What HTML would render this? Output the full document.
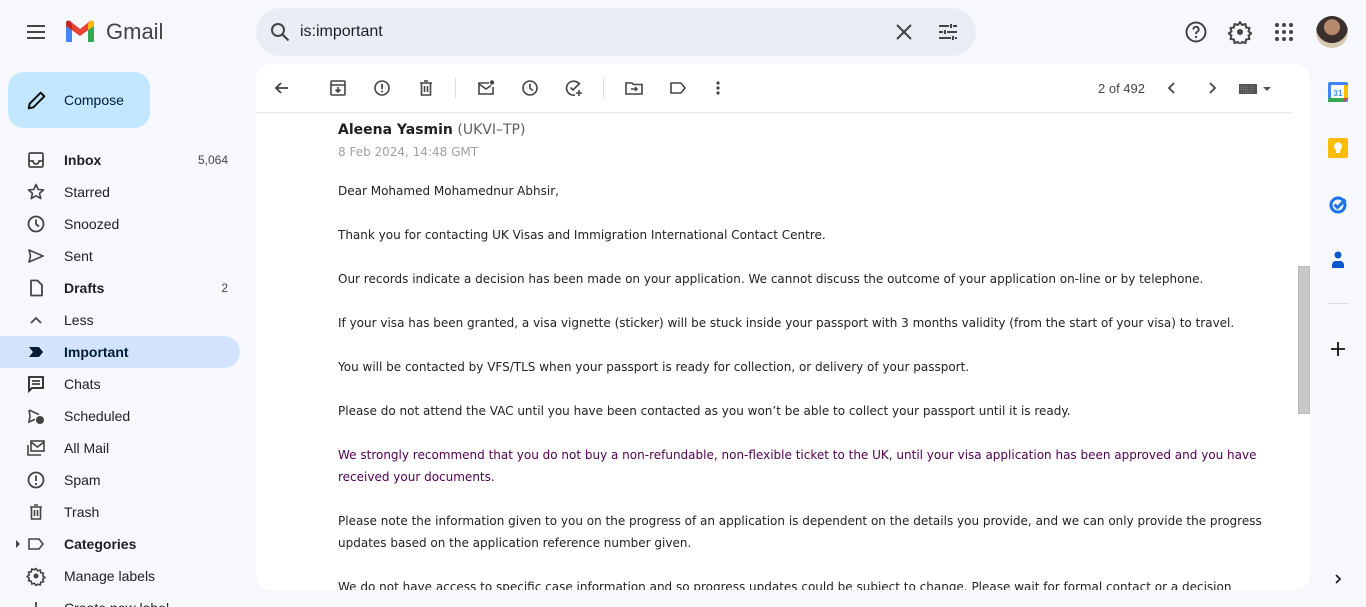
<!DOCTYPE html>
<html><head><meta charset="utf-8"><style>
*{box-sizing:border-box;margin:0;padding:0}
html,body{width:1366px;height:607px;overflow:hidden}
body{background:#f6f8fc;font-family:"Liberation Sans",Arial,sans-serif;color:#1f1f1f;position:relative}
.abs{position:absolute}
svg{display:block}
.nav{position:absolute;left:0;width:240px;height:32px;display:flex;align-items:center;font-size:14px;color:#202124;border-radius:0 16px 16px 0}
.nav .ic{width:64px;display:flex;justify-content:center;padding-left:8px}
.nav .ic svg{width:20px;height:20px}
.nav .cnt{margin-left:auto;margin-right:12px;font-size:12px;color:#444}
.nav b{font-weight:bold}
svg.tb{position:absolute;top:78px;width:20px;height:20px}
.card{position:absolute;left:256px;top:64px;width:1054px;height:526px;background:#fff;border-radius:16px;overflow:hidden}
.body{position:absolute;left:82px;top:116px;font-family:"DejaVu Sans",Verdana,sans-serif;font-size:12px;line-height:22px;color:#222;width:940px}
.body p{margin-bottom:22px}
</style></head><body>
<svg class="abs" style="left:24px;top:22px" width="24" height="20" viewBox="0 0 24 20"><path d="M3 4h18M3 10h18M3 16h18" stroke="#444" stroke-width="2"/></svg>
<svg class="abs" style="left:64px;top:20px" width="32" height="24" viewBox="0 0 32 24"><path d="M2 6v16h6V10z" fill="#4285f4"/><path d="M24 10v12h6V6z" fill="#34a853"/><path d="M2 6l14 10 14-10V3c0-2-2-3-4-2L16 9 6 1C4 0 2 1 2 3z" fill="#ea4335"/><path d="M24 4v6l6-4V3c0-2-3-3-4-2z" fill="#fbbc04"/><path d="M2 3v3l6 4V4L6 1C4 0 2 1 2 3z" fill="#c5221f"/></svg>
<div class="abs" style="left:106px;top:19px;font-size:22px;color:#444">Gmail</div>
<div class="abs" style="left:256px;top:8px;width:720px;height:48px;background:#e9eef6;border-radius:24px"></div>
<svg class="abs" style="left:268px;top:20px" width="24" height="24" viewBox="0 0 24 24"><circle cx="10" cy="10" r="6" fill="none" stroke="#444" stroke-width="2"/><path d="M14.5 14.5l6 6" stroke="#444" stroke-width="2.2"/></svg>
<div class="abs" style="left:300px;top:23px;font-size:16px;color:#202124">is:important</div>
<svg class="abs" style="left:894px;top:22px" width="20" height="20" viewBox="0 0 20 20"><path d="M3 3l14 14M17 3L3 17" stroke="#444" stroke-width="2"/></svg>
<svg class="abs" style="left:936px;top:20px" width="24" height="24" viewBox="0 0 24 24"><path d="M3 6h10M17 6h4M3 12h4M11 12h10M3 18h12M19 18h2M15 4v4M9 10v4M17 16v4" stroke="#444" stroke-width="2"/></svg>
<svg class="abs" style="left:1184px;top:20px" width="24" height="24" viewBox="0 0 24 24"><circle cx="12" cy="12" r="9.5" fill="none" stroke="#444" stroke-width="2"/><path d="M9.3 9.5a2.7 2.7 0 1 1 3.7 2.5c-.8.4-1 1-1 2" fill="none" stroke="#444" stroke-width="2"/><circle cx="12" cy="17" r="1.2" fill="#444"/></svg>
<svg class="abs" style="left:1228px;top:20px" width="24" height="24" viewBox="0 0 24 24"><circle cx="12" cy="12" r="3" fill="#444"/><path d="M12 2l2 3 3.5-1 .5 3.5 3.5.5-1 3.5 3 2-3 2 1 3.5-3.5.5-.5 3.5-3.5-1-2 3-2-3-3.5 1-.5-3.5-3.5-.5 1-3.5-3-2 3-2-1-3.5 3.5-.5.5-3.5 3.5 1z" fill="none" stroke="#444" stroke-width="2" stroke-linejoin="round"/></svg>
<svg class="abs" style="left:1274px;top:22px" width="20" height="20" viewBox="0 0 20 20" fill="#444"><circle cx="3" cy="3" r="2"/><circle cx="10" cy="3" r="2"/><circle cx="17" cy="3" r="2"/><circle cx="3" cy="10" r="2"/><circle cx="10" cy="10" r="2"/><circle cx="17" cy="10" r="2"/><circle cx="3" cy="17" r="2"/><circle cx="10" cy="17" r="2"/><circle cx="17" cy="17" r="2"/></svg>
<div class="abs" style="left:1316px;top:16px;width:32px;height:32px;border-radius:50%;background:radial-gradient(circle at 50% 35%,#b58a6c 0 30%,#3a2f2c 31% 60%,#d8c8b0 61%);overflow:hidden"></div>
<div class="abs" style="left:8px;top:72px;width:142px;height:56px;background:#c2e7ff;border-radius:16px"></div>
<svg class="abs" style="left:26px;top:89px" width="22" height="22" viewBox="0 0 24 24"><path d="M3 21l1-5L16 4l4 4L8 20z" fill="none" stroke="#111" stroke-width="2.2" stroke-linejoin="round"/></svg>
<div class="abs" style="left:64px;top:92px;font-size:14px;color:#001d35">Compose</div>
<div class="nav" style="top:144px"><span class="ic"><svg viewBox="0 0 20 20"><rect x="3" y="3" width="14" height="14" rx="1.5" fill="none" stroke="#444" stroke-width="1.8"/><path d="M3 11h4a3 3 0 0 0 6 0h4" fill="none" stroke="#444" stroke-width="1.8"/></svg></span><b>Inbox</b><span class="cnt">5,064</span></div>
<div class="nav" style="top:176px"><span class="ic"><svg viewBox="0 0 20 20"><path d="M10 2.5l2.2 5 5.3.4-4 3.5 1.3 5.2L10 13.8l-4.8 2.8 1.3-5.2-4-3.5 5.3-.4z" fill="none" stroke="#444" stroke-width="1.6" stroke-linejoin="round"/></svg></span>Starred</div>
<div class="nav" style="top:208px"><span class="ic"><svg viewBox="0 0 20 20"><circle cx="10" cy="10" r="7.5" fill="none" stroke="#444" stroke-width="1.8"/><path d="M10 5.5V10l3 2.5" fill="none" stroke="#444" stroke-width="1.8"/></svg></span>Snoozed</div>
<div class="nav" style="top:240px"><span class="ic"><svg viewBox="0 0 20 20"><path d="M3 4l14 6-14 6 1.5-6z" fill="none" stroke="#444" stroke-width="1.6" stroke-linejoin="round"/></svg></span>Sent</div>
<div class="nav" style="top:272px"><span class="ic"><svg viewBox="0 0 20 20"><path d="M5 2.5h6.5L16 7v10.5H5z" fill="none" stroke="#444" stroke-width="1.8" stroke-linejoin="round"/></svg></span><b>Drafts</b><span class="cnt">2</span></div>
<div class="nav" style="top:304px"><span class="ic"><svg viewBox="0 0 20 20"><path d="M5 13l5-5 5 5" fill="none" stroke="#444" stroke-width="1.8"/></svg></span>Less</div>
<div class="nav" style="top:336px;background:#d3e3fd;color:#001d35"><span class="ic"><svg viewBox="0 0 20 20"><path d="M3 5h10l4 5-4 5H3l4-5z" fill="#001d35"/></svg></span><b>Important</b></div>
<div class="nav" style="top:368px"><span class="ic"><svg viewBox="0 0 20 20"><path d="M3 3h14v11H6l-3 3z" fill="none" stroke="#222" stroke-width="1.8"/><path d="M6 7h8M6 10h8" stroke="#222" stroke-width="1.6"/></svg></span>Chats</div>
<div class="nav" style="top:400px"><span class="ic"><svg viewBox="0 0 20 20"><path d="M3 4l10 4.5M3 4l1 6-1 6 6-2.7" fill="none" stroke="#444" stroke-width="1.6"/><circle cx="14" cy="14" r="4" fill="#444"/></svg></span>Scheduled</div>
<div class="nav" style="top:432px"><span class="ic"><svg viewBox="0 0 20 20"><path d="M2 7v10h13" fill="none" stroke="#444" stroke-width="1.6"/><rect x="5" y="3" width="13" height="10" fill="none" stroke="#444" stroke-width="1.6"/><path d="M5 4l6.5 5L18 4" fill="none" stroke="#444" stroke-width="1.6"/></svg></span>All Mail</div>
<div class="nav" style="top:464px"><span class="ic"><svg viewBox="0 0 20 20"><circle cx="10" cy="10" r="7.5" fill="none" stroke="#444" stroke-width="1.8"/><path d="M10 5.5v5.5" stroke="#444" stroke-width="1.8"/><circle cx="10" cy="14" r="1.1" fill="#444"/></svg></span>Spam</div>
<div class="nav" style="top:496px"><span class="ic"><svg viewBox="0 0 20 20"><path d="M4 5h12M8 3h4M5.5 5v12h9V5M8.5 8v6M11.5 8v6" fill="none" stroke="#444" stroke-width="1.6"/></svg></span>Trash</div>
<div class="nav" style="top:528px"><svg class="abs" style="left:15px;top:12px" width="6" height="8" viewBox="0 0 6 8"><path d="M1 0l4 4-4 4z" fill="#444"/></svg><span class="ic"><svg viewBox="0 0 20 20"><path d="M3 5h10l4 5-4 5H3z" fill="none" stroke="#444" stroke-width="1.6" stroke-linejoin="round"/></svg></span><b>Categories</b></div>
<div class="nav" style="top:560px"><span class="ic"><svg viewBox="0 0 20 20"><circle cx="10" cy="10" r="2.5" fill="#444"/><path d="M10 2.5l1.6 2.3 2.7-.8.4 2.8 2.8.4-.8 2.7 2.3 1.6-2.3 1.6.8 2.7-2.8.4-.4 2.8-2.7-.8L10 19.5l-1.6-2.3-2.7.8-.4-2.8-2.8-.4.8-2.7L1 10.5l2.3-1.6-.8-2.7 2.8-.4.4-2.8 2.7.8z" fill="none" stroke="#444" stroke-width="1.6" stroke-linejoin="round"/></svg></span>Manage labels</div>
<div class="nav" style="top:592px"><span class="ic"><svg viewBox="0 0 20 20"><path d="M10 4v12M4 10h12" stroke="#444" stroke-width="1.8"/></svg></span>Create new label</div>
<div class="card">
  <div class="abs" style="left:0;top:48px;width:1036px;height:1px;background:#e8e8e8;box-shadow:0 1px 2px rgba(0,0,0,.08)"></div>
  <div class="abs" style="left:82px;top:58px;font-family:'DejaVu Sans',sans-serif;font-size:14px;color:#1f1f1f"><b>Aleena Yasmin</b> <span style="color:#5e5e5e">(UKVI–TP)</span></div>
  <div class="abs" style="left:82px;top:81px;font-family:'DejaVu Sans',sans-serif;font-size:12px;color:#a0a0a0">8 Feb 2024, 14:48 GMT</div>
  <div class="body">
    <p>Dear Mohamed Mohamednur Abhsir,</p>
    <p>Thank you for contacting UK Visas and Immigration International Contact Centre.</p>
    <p>Our records indicate a decision has been made on your application. We cannot discuss the outcome of your application on-line or by telephone.</p>
    <p>If your visa has been granted, a visa vignette (sticker) will be stuck inside your passport with 3 months validity (from the start of your visa) to travel.</p>
    <p>You will be contacted by VFS/TLS when your passport is ready for collection, or delivery of your passport.</p>
    <p>Please do not attend the VAC until you have been contacted as you won’t be able to collect your passport until it is ready.</p>
    <p style="color:#500050">We strongly recommend that you do not buy a non-refundable, non-flexible ticket to the UK, until your visa application has been approved and you have received your documents.</p>
    <p>Please note the information given to you on the progress of an application is dependent on the details you provide, and we can only provide the progress updates based on the application reference number given.</p>
    <p>We do not have access to specific case information and so progress updates could be subject to change. Please wait for formal contact or a decision</p>
  </div>
  <div class="abs" style="left:1042px;top:202px;width:12px;height:148px;background:#c8c8c8;border:1px solid #b8b8b8"></div>
  <div class="abs" style="left:842px;top:17px;font-size:13px;color:#444">2 of 492</div>
</div>
<svg class="tb" style="left:272px" viewBox="0 0 20 20"><path d="M16 10H4M9 5l-5 5 5 5" fill="none" stroke="#444" stroke-width="1.8"/></svg>
<svg class="tb" style="left:328px" viewBox="0 0 20 20"><rect x="3" y="3" width="14" height="14" rx="1" fill="none" stroke="#444" stroke-width="1.6"/><path d="M3 7h14M10 9v5M7.5 11.5L10 14l2.5-2.5" fill="none" stroke="#444" stroke-width="1.6"/></svg>
<svg class="tb" style="left:372px" viewBox="0 0 20 20"><circle cx="10" cy="10" r="7" fill="none" stroke="#444" stroke-width="1.6"/><path d="M10 6v5" stroke="#444" stroke-width="1.8"/><circle cx="10" cy="13.5" r="1" fill="#444"/></svg>
<svg class="tb" style="left:416px" viewBox="0 0 20 20"><path d="M4 5h12M8 3h4M5.5 5v12h9V5M8.5 8v6M11.5 8v6" fill="none" stroke="#444" stroke-width="1.6"/></svg>
<div class="abs" style="left:455px;top:78px;width:1px;height:20px;background:#ddd"></div>
<svg class="tb" style="left:476px" viewBox="0 0 20 20"><path d="M13 5H3v11h14V9" fill="none" stroke="#444" stroke-width="1.6"/><path d="M3 6l7 5 5-3.5" fill="none" stroke="#444" stroke-width="1.6"/><circle cx="16" cy="4.5" r="2.2" fill="#444"/></svg>
<svg class="tb" style="left:520px" viewBox="0 0 20 20"><circle cx="10" cy="10" r="7" fill="none" stroke="#444" stroke-width="1.6"/><path d="M10 6v4.5l3 2" fill="none" stroke="#444" stroke-width="1.6"/></svg>
<svg class="tb" style="left:564px" viewBox="0 0 20 20"><path d="M15.5 6.5A7 7 0 1 0 11 17" fill="none" stroke="#444" stroke-width="1.6"/><path d="M6.5 9.5l2.5 2.5 7-7M15 12v6M12 15h6" fill="none" stroke="#444" stroke-width="1.6"/></svg>
<div class="abs" style="left:603px;top:78px;width:1px;height:20px;background:#ddd"></div>
<svg class="tb" style="left:624px" viewBox="0 0 20 20"><path d="M2 5h6l1.5 1.5H18V16H2z" fill="none" stroke="#444" stroke-width="1.6"/><path d="M7 11h6M11 9l2 2-2 2" fill="none" stroke="#444" stroke-width="1.5"/></svg>
<svg class="tb" style="left:668px" viewBox="0 0 20 20"><path d="M3 5h10l4 5-4 5H3z" fill="none" stroke="#444" stroke-width="1.6" stroke-linejoin="round"/></svg>
<svg class="tb" style="left:708px" viewBox="0 0 20 20" fill="#444"><circle cx="10" cy="5" r="1.6"/><circle cx="10" cy="10" r="1.6"/><circle cx="10" cy="15" r="1.6"/></svg>
<svg class="tb" style="left:1162px" viewBox="0 0 20 20"><path d="M12 5l-5 5 5 5" fill="none" stroke="#444" stroke-width="1.8"/></svg>
<svg class="tb" style="left:1202px" viewBox="0 0 20 20"><path d="M8 5l5 5-5 5" fill="none" stroke="#444" stroke-width="1.8"/></svg>
<svg class="abs" style="left:1239px;top:83px" width="36" height="12" viewBox="0 0 36 12"><rect x="0" y="1" width="18" height="10" fill="#555"/><path d="M2 4h14M2 6.5h14M4 9h10" stroke="#999" stroke-width=".8" stroke-dasharray="1 1"/><path d="M24 4h8l-4 4z" fill="#555"/></svg>
<svg class="abs" style="left:1328px;top:82px" width="20" height="20" viewBox="0 0 20 20"><rect x="0" y="0" width="20" height="20" rx="2" fill="#4285f4"/><rect x="3" y="3" width="14" height="14" fill="#fff"/><rect x="0" y="16" width="16" height="4" fill="#34a853"/><rect x="16" y="3" width="4" height="13" fill="#fbbc04"/><path d="M16 16h4l-4 4z" fill="#ea4335"/><text x="10" y="14" font-size="8" font-family="Liberation Sans" font-weight="bold" fill="#4285f4" text-anchor="middle">31</text></svg>
<svg class="abs" style="left:1328px;top:138px" width="20" height="20" viewBox="0 0 20 20"><rect width="20" height="20" rx="2" fill="#fbbc04"/><circle cx="10" cy="8.5" r="4" fill="#fff"/><rect x="8" y="12" width="4" height="3" fill="#fff"/></svg>
<svg class="abs" style="left:1328px;top:194px" width="20" height="20" viewBox="0 0 20 20"><circle cx="10" cy="11" r="7" fill="none" stroke="#1a73e8" stroke-width="3"/><path d="M6.5 10.5l3 3 8-8" fill="none" stroke="#1a73e8" stroke-width="3"/></svg>
<svg class="abs" style="left:1328px;top:250px" width="20" height="20" viewBox="0 0 20 20"><circle cx="10" cy="5" r="3.5" fill="#0b57d0"/><path d="M4 18v-3a4 4 0 0 1 4-4h4a4 4 0 0 1 4 4v3z" fill="#0b57d0"/></svg>
<div class="abs" style="left:1328px;top:303px;width:20px;height:1px;background:#ddd"></div>
<svg class="abs" style="left:1328px;top:339px" width="20" height="20" viewBox="0 0 20 20"><path d="M10 3v14M3 10h14" stroke="#111" stroke-width="1.8"/></svg>
<svg class="abs" style="left:1332px;top:572px" width="12" height="14" viewBox="0 0 12 14"><path d="M4 3l4 4-4 4" fill="none" stroke="#222" stroke-width="1.8"/></svg>
</body></html>
